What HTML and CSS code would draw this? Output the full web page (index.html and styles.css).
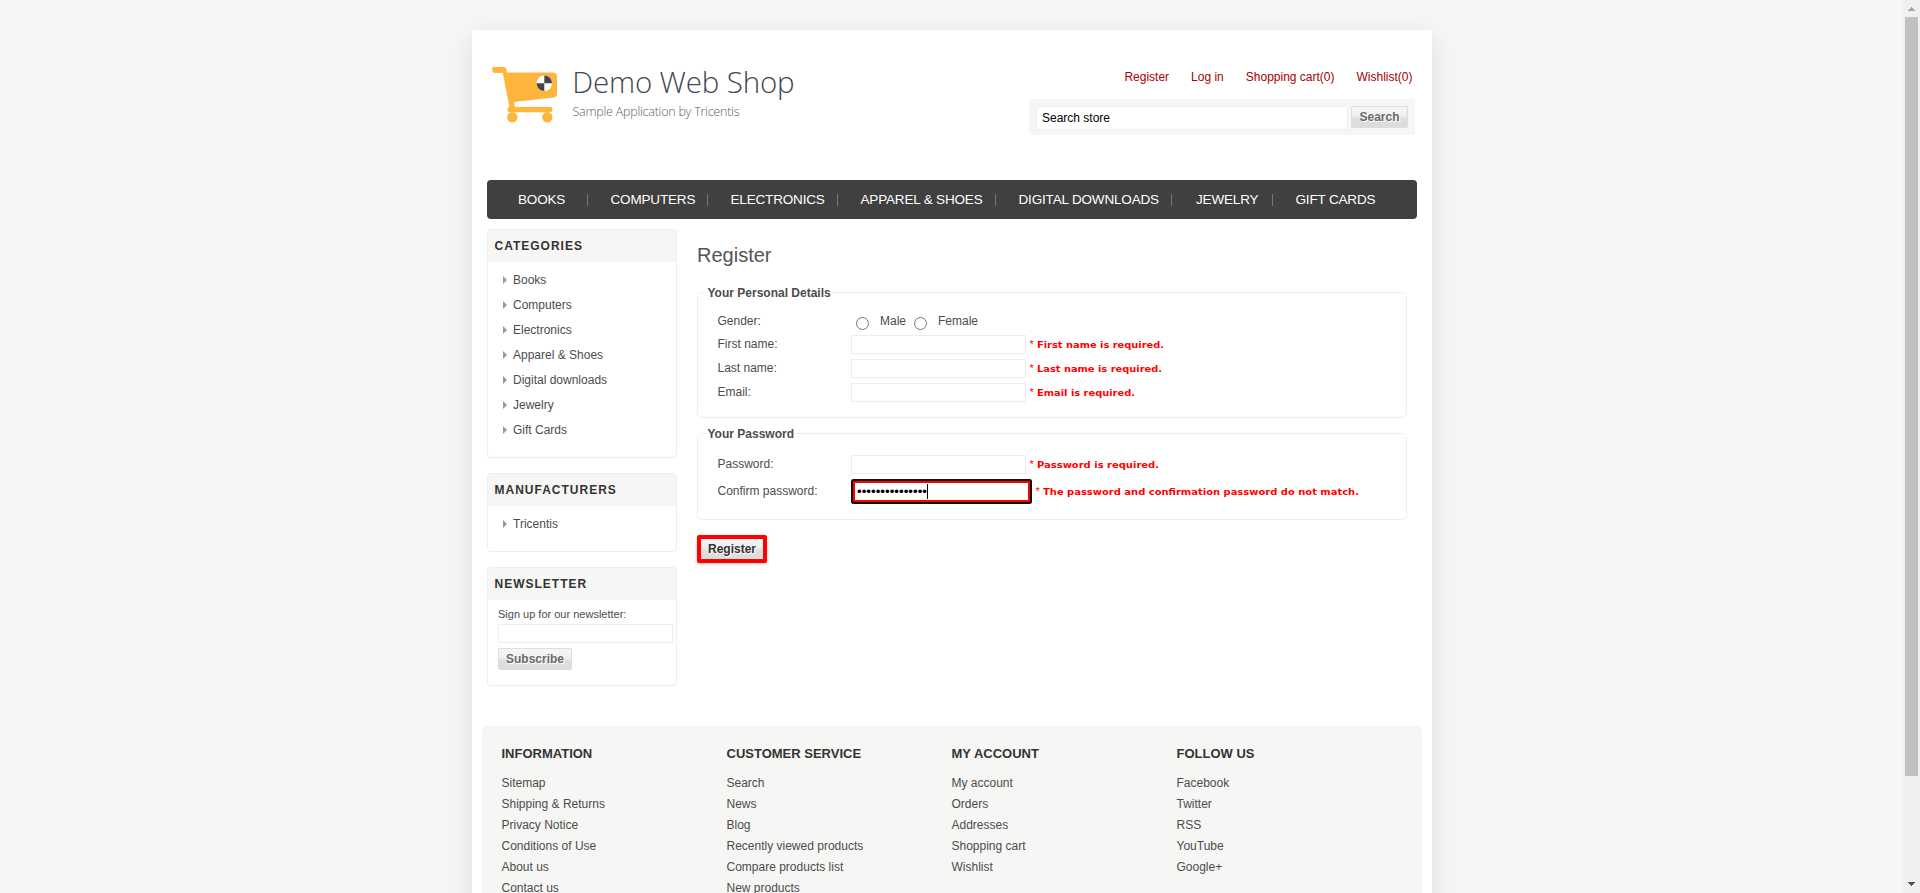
FILE: index.html
```html
<!DOCTYPE html>
<html lang="en">
<head>
<meta charset="utf-8">
<title>Demo Web Shop. Register</title>
<link rel="stylesheet" href="styles.css">
</head>
<body>
<div class="viewport">
  <div class="canvas">
    <div class="page">
      <header class="header">
        <svg class="logo" width="320" height="70" viewBox="0 0 320 70">
          <g fill="#ffb53c">
            <path d="M4.500 6 H15.500 Q18 6 18.400 8.500 L19 11.400 H65 Q69 11.400 69 15 V32.500 Q69 36 66 36.500 L26.200 41 L27 46 H62 Q64.500 46 64.500 48.500 Q64.500 51.300 62 51.300 H22 Q19.500 51.300 19.500 48.500 Q19.500 46.500 21.300 45 L14.700 11.700 H6.500 Q4.500 11.700 4.500 9 Z"/>
            <circle cx="24.300" cy="56.200" r="5.200"/>
            <circle cx="59.300" cy="56.200" r="5.200"/>
            <rect x="4.300" y="6.300" width="14" height="5.200" rx="2.600"/>
          </g>
          <circle cx="56.300" cy="22.200" r="7.800" fill="#fff"/>
          <path d="M56.300 14.400 A7.800 7.800 0 0 1 64.100 22.200 H56.300 Z M56.300 30 A7.800 7.800 0 0 1 48.500 22.200 H56.300 Z" fill="#43464f"/>
          <text class="logo-name" x="84.300" y="32.300" textLength="222.300">Demo Web Shop</text>
          <text class="logo-tag" x="84.500" y="55.200" textLength="167">Sample Application by Tricentis</text>
        </svg>
        <div class="header-side">
          <nav class="account-links"><a>Register</a><a>Log in</a><a>Shopping cart(0)</a><a>Wishlist(0)</a></nav>
          <div class="search-box">
            <div class="search-input">Search store</div>
            <div class="button">Search</div>
          </div>
        </div>
      </header>

      <nav class="menu"><a>BOOKS</a><a>COMPUTERS</a><a>ELECTRONICS</a><a>APPAREL &amp; SHOES</a><a>DIGITAL DOWNLOADS</a><a>JEWELRY</a><a>GIFT CARDS</a></nav>

      <div class="columns">
        <aside class="side">
          <section class="block block-categories">
            <h2>CATEGORIES</h2>
            <ul><li>Books</li><li>Computers</li><li>Electronics</li><li>Apparel &amp; Shoes</li><li>Digital downloads</li><li>Jewelry</li><li>Gift Cards</li></ul>
          </section>
          <section class="block block-makers">
            <h2>MANUFACTURERS</h2>
            <ul><li>Tricentis</li></ul>
          </section>
          <section class="block block-news">
            <h2>NEWSLETTER</h2>
            <div class="news-body">
              <div class="news-label">Sign up for our newsletter:</div>
              <div class="field"></div>
              <div class="button news-button">Subscribe</div>
            </div>
          </section>
        </aside>

        <main class="main">
          <h1>Register</h1>
          <fieldset class="group-personal">
            <legend>Your Personal Details</legend>
            <div class="row row-gender">
              <label>Gender:</label>
              <span class="radio"></span><span class="option">Male</span>
              <span class="radio"></span><span class="option">Female</span>
            </div>
            <div class="row"><label>First name:</label><div class="field"></div><span class="star">*</span><span class="error"><svg width="130" height="16"><text x="0" y="12" textLength="127" lengthAdjust="spacingAndGlyphs">First name is required.</text></svg></span></div>
            <div class="row"><label>Last name:</label><div class="field"></div><span class="star">*</span><span class="error"><svg width="130" height="16"><text x="0" y="12" textLength="125" lengthAdjust="spacingAndGlyphs">Last name is required.</text></svg></span></div>
            <div class="row"><label>Email:</label><div class="field"></div><span class="star">*</span><span class="error"><svg width="130" height="16"><text x="0" y="12" textLength="98" lengthAdjust="spacingAndGlyphs">Email is required.</text></svg></span></div>
          </fieldset>
          <fieldset class="group-password">
            <legend>Your Password</legend>
            <div class="row"><label>Password:</label><div class="field"></div><span class="star">*</span><span class="error"><svg width="130" height="16"><text x="0" y="12" textLength="122" lengthAdjust="spacingAndGlyphs">Password is required.</text></svg></span></div>
            <div class="row row-confirm"><label>Confirm password:</label><div class="field field-focus"><span class="dots">•••••••••••••••</span><span class="caret"></span></div><span class="star">*</span><span class="error"><svg width="320" height="16"><text x="0" y="12" textLength="316" lengthAdjust="spacingAndGlyphs">The password and confirmation password do not match.</text></svg></span></div>
          </fieldset>
          <div class="register-button">Register</div>
        </main>
      </div>

      <footer class="footer">
        <div><h3>INFORMATION</h3><ul><li>Sitemap</li><li>Shipping &amp; Returns</li><li>Privacy Notice</li><li>Conditions of Use</li><li>About us</li><li>Contact us</li></ul></div>
        <div><h3>CUSTOMER SERVICE</h3><ul><li>Search</li><li>News</li><li>Blog</li><li>Recently viewed products</li><li>Compare products list</li><li>New products</li></ul></div>
        <div><h3>MY ACCOUNT</h3><ul><li>My account</li><li>Orders</li><li>Addresses</li><li>Shopping cart</li><li>Wishlist</li></ul></div>
        <div><h3>FOLLOW US</h3><ul><li>Facebook</li><li>Twitter</li><li>RSS</li><li>YouTube</li><li>Google+</li></ul></div>
      </footer>
    </div>
  </div>
  <div class="scrollbar">
    <svg width="17" height="17" shape-rendering="crispEdges"><path d="M8 7h1v1h1v1h1v1h1v1H5v-1h1V9h1V8h1z" fill="#a3a3a3"/></svg>
    <div class="thumb"></div>
    <svg width="17" height="17" shape-rendering="crispEdges"><path d="M5 6h7v1h-1v1h-1v1H9v1H8V9H7V8H6V7H5z" fill="#505050"/></svg>
  </div>
</div>
</body>
</html>
```
FILE: styles.css
```css
* { box-sizing: border-box; }
body { margin: 0; background: #f6f6f4; font: 12px/14px "Liberation Sans", Arial, sans-serif; color: #4c4c4c; }
h1, h2, h3, ul { margin: 0; padding: 0; font-size: inherit; }
ul { list-style: none; }

.viewport { display: flex; height: 893px; overflow: hidden; }
.canvas { flex: 1; height: 893px; padding: 30px 0 0 472px; overflow: hidden; }
.page { width: 960px; height: 1100px; background: #fff; box-shadow: 0 8px 26px rgba(0, 0, 0, .11); }

/* Window scrollbar */
.scrollbar { width: 17px; height: 893px; background: #f0f0f0; display: flex; flex-direction: column; }
.scrollbar svg { display: block; flex: none; }
.scrollbar svg:last-child { margin-top: auto; }
.thumb { width: 13px; height: 759px; margin-left: 2px; background: #c1c1c1; }

/* Header */
.header { height: 150px; display: flex; justify-content: space-between; padding: 31px 17px 0 16px; }
.logo { display: block; }
.logo-name { font: 300 29.500px "Open Sans", sans-serif; fill: #43464f; }
.logo-tag { font: 300 12.500px "Open Sans", sans-serif; fill: #5d6068; }
.header-side { width: 386px; padding-top: 9px; }
.account-links { display: flex; justify-content: flex-end; gap: 22px; padding-right: 2.500px; color: #a80000; }
.search-box { margin-top: 15px; height: 36px; padding: 7px; display: flex; justify-content: space-between; align-items: flex-start; background: #f6f6f4; border-radius: 3px; }
.search-input { width: 312px; height: 24px; padding: 4px 5px; border: 1px solid #eee; background: #fff; color: #000; }
.button { width: 57px; height: 22px; border: 1px solid #ddd; border-radius: 2px; background: linear-gradient(#f6f6f6 0%, #efefef 45%, #dfdfdf 58%, #dcdcdc 100%); text-align: center; line-height: 20px; font-weight: bold; color: #6a6a6a; text-shadow: 1px 1px 0 #fff; }

/* Top menu */
.menu { width: 930px; height: 39px; margin: 0 0 10px 15px; padding: 14px 0; display: grid; grid-template-columns: 101px 120px 130px 158px 176px 101px 144px; background: #404040; border-radius: 4px; color: #fff; font-size: 13.500px; letter-spacing: -.17px; line-height: 12px; }
.menu a { height: 12px; padding-left: 22.500px; border-right: 1px solid #777; white-space: nowrap; line-height: 11px; }
.menu a:first-child { padding-left: 31px; }
.menu a:nth-child(6) { padding-left: 24px; }
.menu a:last-child { border: 0; }

/* Side column */
.columns { display: flex; height: 497px; padding-left: 15px; gap: 20px; }
.side { width: 190px; display: flex; flex-direction: column; gap: 15px; }
.block { border: 1px solid #eee; border-radius: 4px; overflow: hidden; }
.block h2 { height: 32px; padding: 9px 0 0 6.500px; background: #f6f6f4; letter-spacing: 1px; color: #333; }
.block-categories { height: 229px; }
.block-makers { height: 79px; }
.block-news { height: 119px; }
.block ul { padding: 6px 0 0 15px; }
.block li { height: 25px; line-height: 25px; display: flex; align-items: center; gap: 6px; }
.block li::before { content: ""; margin-bottom: 1px; border-left: 4px solid #999; border-top: 4px solid transparent; border-bottom: 4px solid transparent; }
.news-body { padding: 7px 0 0 10px; }
.news-label { height: 17px; font-size: 11px; }
.field { width: 175px; height: 19px; border: 1px solid #eee; background: #fff; }
.news-button { width: 74px; margin-top: 5px; }

/* Registration form */
.main { width: 710px; }
h1 { padding-top: 13px; height: 57px; font-size: 20px; line-height: 26px; font-weight: normal; color: #555; }
fieldset { margin: 0 0 9px; padding: 0 10px 0 9.500px; border: 1px solid #eee; border-radius: 5px; }
legend { padding: 0; height: 13px; font-weight: bold; color: #4c4c4c; }
.group-personal { height: 132px; }
.group-password { height: 93px; margin-bottom: 15px; }
.row { display: flex; height: 24px; padding: 2px 0 0 10px; }
.row label { width: 133.500px; padding-top: 2px; }
.row-gender { height: 34px; padding-top: 15px; }
.row-gender label { padding: 0; }
.radio { width: 13px; height: 13px; margin: 3px 11px 0 5px; border: 1px solid #767676; border-radius: 50%; background: #fff; }
.option { width: 29px; }
.group-password .row { height: 37px; padding-top: 15px; }
.group-password .row-confirm { height: 29px; padding-top: 2px; }
.row-confirm label { padding-top: 5px; }
.field-focus { width: 181px; height: 25px; display: flex; align-items: center; padding-left: 2px; border: 4px solid #f00; outline: 2px solid #101010; outline-offset: -2px; border-radius: 3px; color: #000; }
.star { width: 11px; padding: 3px 0 0 3.500px; color: #f00; font-size: 11px; line-height: 12px; }
.error { padding-top: 1px; font: bold 9.500px "DejaVu Sans", sans-serif; }
.error svg { display: block; fill: #f00; }
.dots { width: 70px; font-size: 13.330px; line-height: 14px; }
.caret { width: 1px; height: 15px; background: #000; }
.row-confirm .star { padding-top: 6px; }
.row-confirm .error { padding-top: 4px; }
.register-button { width: 70px; height: 28px; border: 4px solid #f00; border-radius: 2px; background: linear-gradient(#f6f6f6 0%, #efefef 40%, #dfdfdf 60%, #dcdcdc 100%); box-shadow: 0 1px 3px rgba(0, 0, 0, .25); text-align: center; line-height: 20px; font-weight: bold; color: #333; text-shadow: 1px 1px 0 #fff; }

/* Footer */
.footer { width: 940px; height: 300px; margin-left: 10px; padding: 20px 19.500px; display: grid; grid-template-columns: repeat(4, 225px); background: #f6f6f4; border-radius: 4px; }
.footer h3 { height: 27px; font-size: 13px; line-height: 16px; color: #333; }
.footer li { height: 21px; line-height: 21px; }
```
